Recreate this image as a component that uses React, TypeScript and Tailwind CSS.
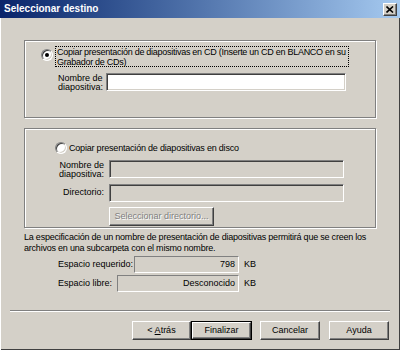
import React from 'react'

const sunken =
  'border border-t-[#808080] border-l-[#808080] border-b-white border-r-white shadow-[inset_1px_1px_0_#404040,inset_-1px_-1px_0_#d4d0c8]'
const raised =
  'border border-t-white border-l-white border-b-[#404040] border-r-[#404040] shadow-[inset_-1px_-1px_0_#808080,inset_1px_1px_0_#d4d0c8]'
const etched = 'border border-[#808080] shadow-[inset_1px_1px_0_#fff,1px_1px_0_#fff]'
const thin = 'border border-t-[#808080] border-l-[#808080] border-b-white border-r-white'
const disabledText = 'text-[#808080] [text-shadow:1px_1px_0_#fff]'

function Radio({ checked }: { checked?: boolean }) {
  return (
    <div
      className={`flex h-[12px] w-[12px] shrink-0 items-center justify-center rounded-full bg-white ${sunken}`}
    >
      {checked && <div className="h-[4px] w-[4px] rounded-full bg-black" />}
    </div>
  )
}

function Button({ label, w, def, disabled }: { label: React.ReactNode; w: string; def?: boolean; disabled?: boolean }) {
  const inner = (
    <div
      className={`flex h-full w-full items-center justify-center whitespace-nowrap bg-[#d4d0c8] ${raised} ${disabled ? disabledText : ''}`}
    >
      {label}
    </div>
  )
  if (def) return <div className={`h-[19px] border border-black ${w}`}>{inner}</div>
  return <div className={`h-[19px] ${w}`}>{inner}</div>
}

export default function App() {
  return (
    <div className="flex h-[350px] w-[400px] flex-col overflow-hidden bg-[#d4d0c8] font-['Liberation_Sans',Arial,sans-serif] text-[9px] text-black shadow-[inset_1px_0_0_#fff,inset_-1px_-1px_0_#404040]">
      {/* title bar */}
      <div className="flex h-[18px] shrink-0 items-center justify-between bg-gradient-to-r from-[#0a246a] to-[#a6caf0] pl-[4px] pr-[3px]">
        <span className="text-[10px] font-bold leading-none text-white">Seleccionar destino</span>
        <div className={`flex h-[13px] w-[14px] items-center justify-center bg-[#d4d0c8] ${raised}`}>
          <svg width="8" height="7" viewBox="0 0 8 7">
            <path d="M0.5 0.5 L7 6.5 M7 0.5 L0.5 6.5" stroke="#000" strokeWidth="1.6" />
          </svg>
        </div>
      </div>

      {/* group 1 */}
      <div className={`ml-[24px] mt-[22px] h-[78px] w-[352px] pt-[5px] ${etched}`}>
        <div className="flex items-start pl-[16px]">
          <div className="mt-[3px]">
            <Radio checked />
          </div>
          <div className="ml-[2px] h-[21px] w-[294px] whitespace-nowrap border border-dotted border-black px-[1px] leading-[10px] tracking-[-0.27px]">
            Copiar presentación de diapositivas en CD (Inserte un CD en BLANCO en su
            <br />
            Grabador de CDs)
          </div>
        </div>
        <div className="mt-[6px] flex items-start pl-[33px]">
          <div className="w-[48px] whitespace-nowrap pt-[1px] leading-[9px]">
            Nombre de
            <br />
            diapositiva:
          </div>
          <div className={`h-[18px] w-[240px] bg-white ${sunken}`} />
        </div>
      </div>

      {/* group 2 */}
      <div className={`ml-[24px] mt-[10px] h-[100px] w-[352px] ${etched}`}>
        <div className="mt-[13px] flex items-center pl-[30px]">
          <Radio />
          <span className="ml-[2px] leading-[12px] tracking-[-0.2px]">
            Copiar presentación de diapositivas en disco
          </span>
        </div>
        <div className="mt-[6px] flex items-start">
          <div className="w-[79px] whitespace-nowrap pt-[1px] text-right leading-[9px]">
            Nombre de
            <br />
            diapositiva:
          </div>
          <div className={`ml-[5px] h-[18px] w-[235px] ${sunken}`} />
        </div>
        <div className="mt-[5px] flex items-center">
          <div className="w-[79px] text-right">Directorio:</div>
          <div className={`ml-[5px] h-[18px] w-[235px] ${sunken}`} />
        </div>
        <div className="ml-[84px] mt-[5px]">
          <Button label="Seleccionar directorio..." w="w-[105px]" disabled />
        </div>
      </div>

      <p className="ml-[24px] mt-[4px] whitespace-nowrap leading-[11px] tracking-[-0.22px]">
        La especificación de un nombre de presentación de diapositivas permitirá que se creen los
        <br />
        archivos en una subcarpeta con el mismo nombre.
      </p>

      <div className="mt-[2px] flex items-center">
        <span className="ml-[58px] w-[76px] whitespace-nowrap">Espacio requerido:</span>
        <div className={`flex h-[17px] w-[105px] items-center justify-end pr-[3px] ${thin}`}>798</div>
        <span className="ml-[5px]">KB</span>
      </div>
      <div className="mt-[2px] flex items-center">
        <span className="ml-[58px] w-[59px] whitespace-nowrap">Espacio libre:</span>
        <div className={`flex h-[17px] w-[122px] items-center justify-end pr-[3px] ${thin}`}>Desconocido</div>
        <span className="ml-[5px]">KB</span>
      </div>

      <div className="ml-[10px] mt-[18px] w-[380px] border-t border-b border-t-[#808080] border-b-white" />

      <div className="mt-[9px] flex pl-[132px]">
        <Button
          label={
            <span>
              &lt; <span className="underline">A</span>trás
            </span>
          }
          w="w-[59px]"
        />
        <Button label="Finalizar" w="w-[61px]" def />
        <div className="ml-[8px]">
          <Button label="Cancelar" w="w-[60px]" />
        </div>
        <div className="ml-[9px]">
          <Button label="Ayuda" w="w-[60px]" />
        </div>
      </div>
    </div>
  )
}
